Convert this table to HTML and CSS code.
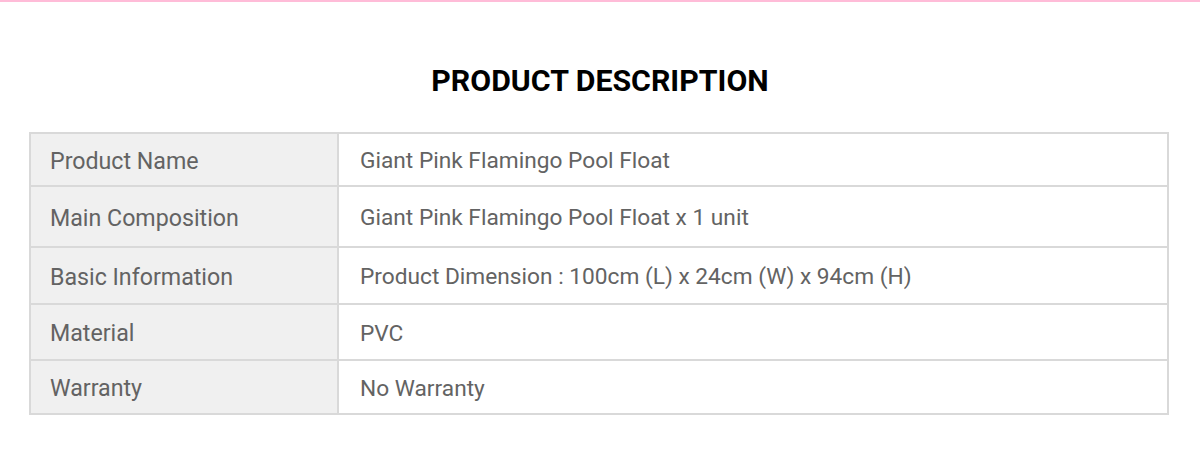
FILE: index.html
```html
<!DOCTYPE html>
<html>
<head>
<meta charset="utf-8">
<link rel="stylesheet" href="styles.css">
</head>
<body>
<div class="topline"></div>
<h2 class="title">PRODUCT DESCRIPTION</h2>
<table class="spec">
  <tr class="r1"><th>Product Name</th><td>Giant Pink Flamingo Pool Float</td></tr>
  <tr class="r2"><th>Main Composition</th><td>Giant Pink Flamingo Pool Float x 1 unit</td></tr>
  <tr class="r3"><th>Basic Information</th><td>Product Dimension : 100cm (L) x 24cm (W) x 94cm (H)</td></tr>
  <tr class="r4"><th>Material</th><td>PVC</td></tr>
  <tr class="r5"><th>Warranty</th><td>No Warranty</td></tr>
</table>
</body>
</html>
```
FILE: styles.css
```css
html, body {
  margin: 0;
  padding: 0;
  background: #ffffff;
  font-family: Roboto, "Liberation Sans", sans-serif;
}
.topline {
  height: 2px;
  background: #ffbcd8;
}
.title {
  margin: 0;
  padding-top: 61px;
  height: 69px;
  text-align: center;
  font-size: 30.3px;
  font-weight: 700;
  color: #000;
  line-height: 36px;
  letter-spacing: 0;
}
.spec {
  margin: 0 0 0 29px;
  width: 1140px;
  border-collapse: collapse;
  border: 2px solid #d9d9d9;
  font-size: 22.7px;
  color: #636363;
}
.spec th, .spec td {
  border: 2px solid #d9d9d9;
  padding: 2px 20px 0 21px;
  text-align: left;
  font-weight: 400;
  vertical-align: middle;
}
.spec th {
  width: 267px;
  padding-left: 19px;
  background: #f0f0f0;
  font-size: 23.2px;
}
.r1 { height: 53px; }
.r2 { height: 61px; }
.r3 { height: 57px; }
.r4 { height: 56px; }
.r5 { height: 54px; }
```
